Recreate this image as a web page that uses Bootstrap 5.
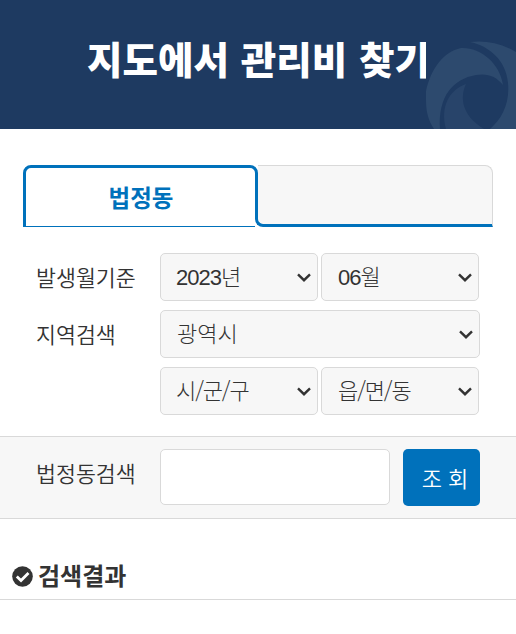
<!DOCTYPE html>
<html lang="ko">
<head>
<meta charset="utf-8">
<meta name="viewport" content="width=device-width, initial-scale=1">
<title>지도에서 관리비 찾기</title>
<link href="https://cdn.jsdelivr.net/npm/bootstrap@5.3.0/dist/css/bootstrap.min.css" rel="stylesheet">
<style>
body{font-family:"Liberation Sans","Noto Sans CJK KR",sans-serif;color:#333;background:#fff;font-size:22px;overflow:hidden}
.hero{height:129px;background:#1e3a61;padding:0 0 14px 87px}
.hero h1{font:900 38px/1.2 "Noto Sans CJK KR",sans-serif;color:#fff;white-space:nowrap;word-spacing:1px;transform-origin:0 50%;transform:scaleX(1.015)}
.emblem{top:35px;right:0;width:90px;height:94px;background:#1e3a61}
.tabs{margin:36px 23px 0;height:62px}
.tab-on{width:235px;padding:2px 0 0 1px;border:3px solid #0071bb;border-bottom-width:1px;border-radius:8px 8px 0 0;background:#fff;color:#0071bb;font:700 23.5px/1 "Noto Sans CJK KR",sans-serif;clip-path:polygon(0 0,100% 0,100% calc(100% - 8px),calc(100% - 3px) calc(100% - 8px),calc(100% - 3px) 100%,0 100%)}
.tab-off{margin-left:-3px;background:#f7f7f7;border:1px solid #d9d9d9;border-left:3px solid #0071bb;border-bottom:3px solid #0071bb;border-radius:0 8px 0 8px;border-bottom-right-radius:0;clip-path:polygon(3px 0,100% 0,100% 100%,0 100%,0 8px,3px 8px)}
.fields{padding:26px 36px 0;row-gap:9px}
.lbl{width:124px;flex:none;font-family:"Noto Sans CJK KR",sans-serif;font-size:21.7px;font-weight:350;line-height:48px;white-space:nowrap}
.pick{height:48px;width:158px;border:1px solid #d9d9d9;border-radius:5px;background-color:#f7f7f7;padding:0 6px 0 15px;font-weight:300}
.pick + .pick{margin-left:3px;padding-left:16px}
.pick.wide{width:320px;padding-left:16px}
.num{letter-spacing:-1px}
.kor{font-family:"Noto Sans CJK KR",sans-serif;letter-spacing:-1.1px;padding-bottom:3px}
.pick svg{width:14px;height:9px}
.search{margin-top:21px;height:83px;background:#f7f7f7;border:solid #d9d9d9;border-width:1px 0;padding:12px 36px 0}
.query{width:230px;height:56px;border:1px solid #d9d9d9;border-radius:5px;background:#fff}
.go{width:77px;height:57px;margin-left:13px;border:0;background:#0071bb;border-radius:5px;color:#fff;font:350 22px/1 "Noto Sans CJK KR",sans-serif;padding:0 0 1px 7px}
.result{margin-top:33px;height:48px;padding:0 0 0 12px;border-bottom:1px solid #d9d9d9}
.result svg{margin-top:2px}
.result h2{font:700 24px/1 "Noto Sans CJK KR",sans-serif;margin:0 0 2px 5px}
</style>
<script src="https://cdn.jsdelivr.net/npm/bootstrap@5.3.0/dist/js/bootstrap.bundle.min.js"></script>
</head>
<body>
<svg class="d-none"><symbol id="chev" viewBox="0 0 14 9"><path d="M1 1.3L7 7.2L13 1.3" fill="none" stroke="#333" stroke-width="2.4"/></symbol></svg>
<header class="hero position-relative d-flex align-items-center">
<h1 class="m-0">지도에서 관리비 찾기</h1>
<svg class="emblem position-absolute" viewBox="426 35 90 94" aria-hidden="true">
<path fill="#2d4a6e" d="M434 129C428 120 426 111 426 100V91C431 69 443 52 461 48C480 47 500 63 503 85C496 76 487 73 476 75C453 79 438 96 440 129Z"/>
<path fill="#2d4a6e" d="M470 42C485 40 501 43 516 52V129H490C502 119 510 103 508 83C506 60 489 46 470 42Z"/>
<path fill="#28446a" d="M446 129C440 107 449 90 466 84C460 97 461 115 484 129Z"/>
</svg>
</header>
<nav class="tabs d-flex">
<div class="tab-on d-flex align-items-center justify-content-center">법정동</div>
<div class="tab-off flex-grow-1"></div>
</nav>
<main>
<div class="fields d-flex flex-column">
<div class="d-flex">
<span class="lbl">발생월기준</span>
<div class="pick d-flex align-items-center justify-content-between"><span><span class="num">2023</span>년</span><svg><use href="#chev"/></svg></div>
<div class="pick d-flex align-items-center justify-content-between"><span><span class="num">06</span>월</span><svg><use href="#chev"/></svg></div>
</div>
<div class="d-flex">
<span class="lbl">지역검색</span>
<div class="pick wide d-flex align-items-center justify-content-between"><span>광역시</span><svg><use href="#chev"/></svg></div>
</div>
<div class="d-flex">
<span class="lbl"></span>
<div class="pick d-flex align-items-center justify-content-between"><span class="kor">시/군/구</span><svg><use href="#chev"/></svg></div>
<div class="pick d-flex align-items-center justify-content-between"><span class="kor">읍/면/동</span><svg><use href="#chev"/></svg></div>
</div>
</div>
<div class="search d-flex">
<label class="lbl" for="q">법정동검색</label>
<input class="query" id="q" type="text">
<button class="go" type="button">조 회</button>
</div>
<div class="result d-flex align-items-center">
<svg width="21" height="21" viewBox="0 0 21 21" aria-hidden="true"><circle cx="10.5" cy="10.5" r="10.3" fill="#333"/><path d="M4.8 10.5L9 14.5L16.5 7" fill="none" stroke="#fff" stroke-width="2.8"/></svg>
<h2>검색결과</h2>
</div>
</main>
</body>
</html>
